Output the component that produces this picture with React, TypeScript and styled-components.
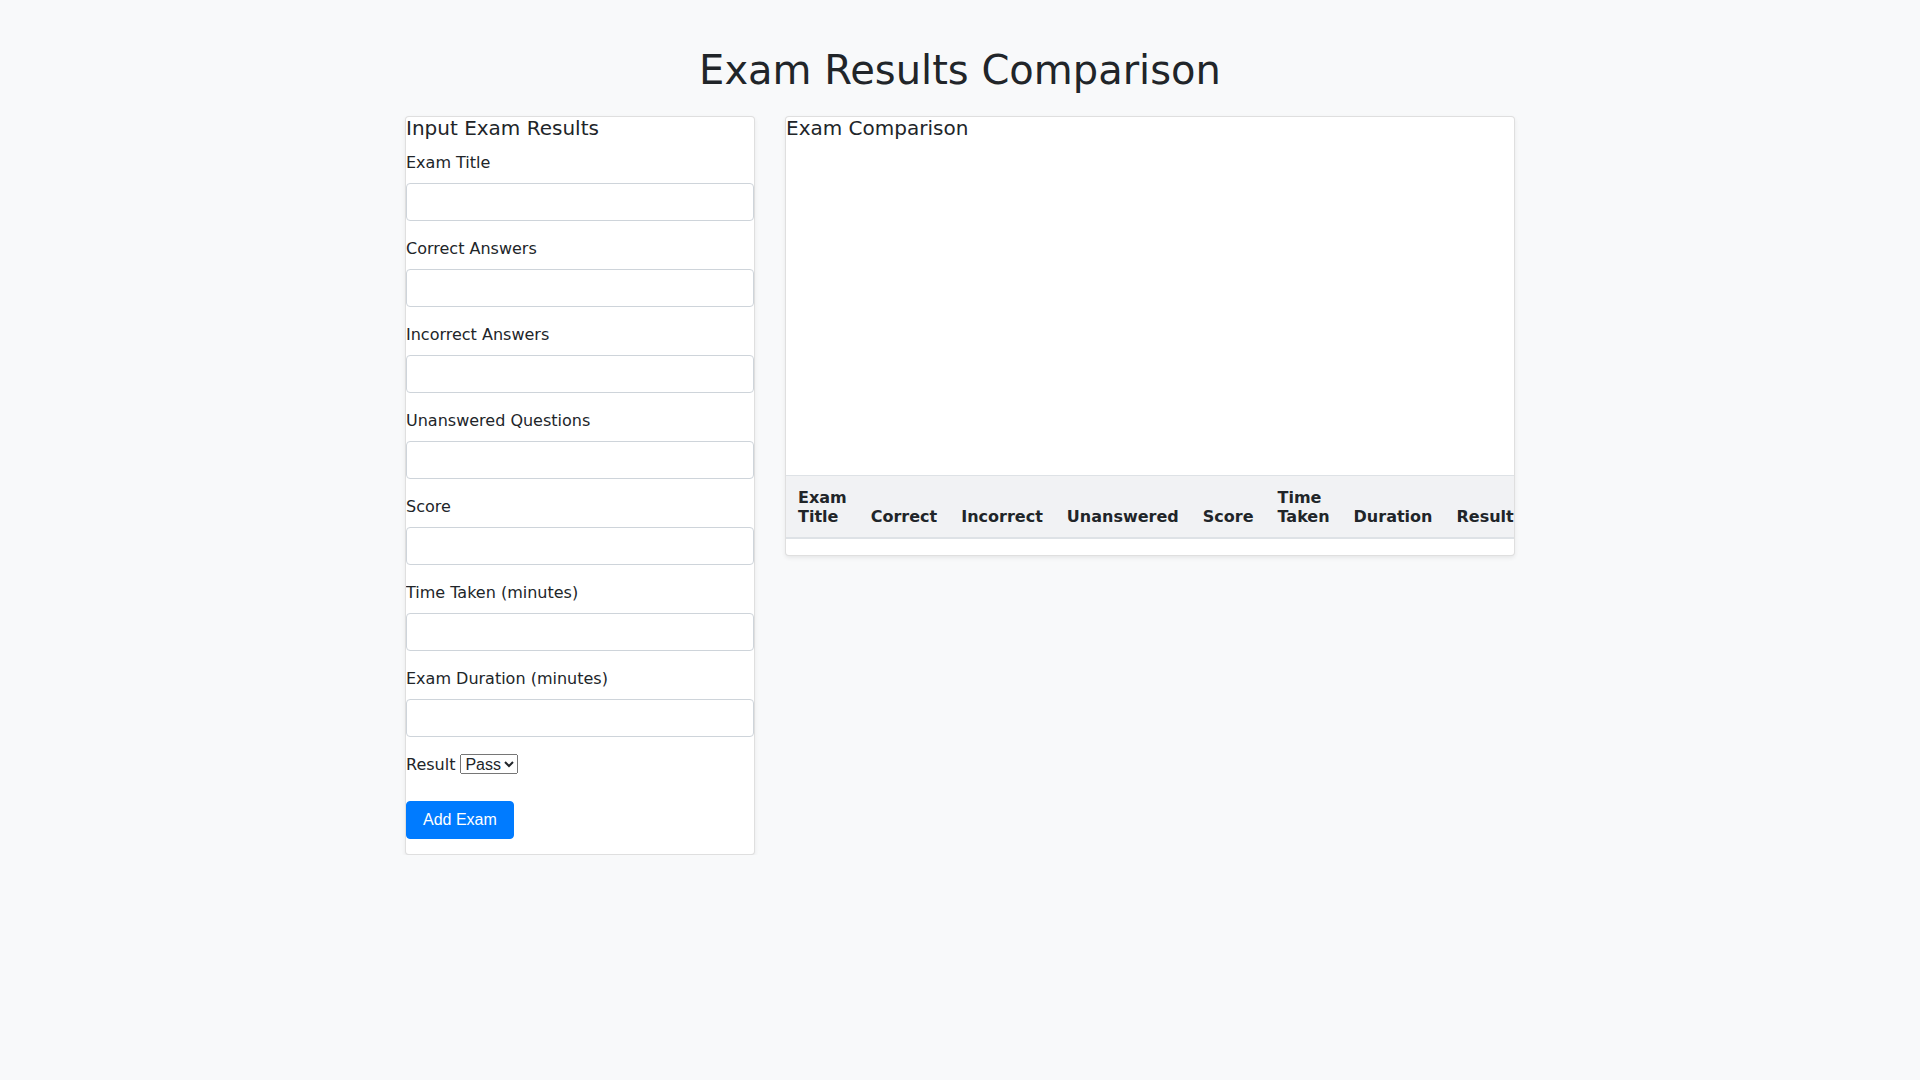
import React from "react";
import styled, { createGlobalStyle } from "styled-components";

const GlobalStyle = createGlobalStyle`
  html, body {
    margin: 0;
    padding: 0;
    background: #f8f9fa;
    color: #212529;
    font-family: "DejaVu Sans", sans-serif;
    font-size: 16px;
    line-height: 1.5;
  }
  * { box-sizing: border-box; }
`;

const Container = styled.div`
  max-width: 1140px;
  margin: 0 auto;
  padding: 0 15px;
`;

const Title = styled.h1`
  margin: 46px 0 22px;
  font-size: 40px;
  font-weight: 400;
  line-height: 48px;
  text-align: center;
`;

const Row = styled.div`
  display: grid;
  grid-template-columns: 350px 1fr;
  column-gap: 30px;
  align-items: start;
`;

const Card = styled.section`
  background: #fff;
  border: 1px solid rgba(0, 0, 0, 0.125);
  border-radius: 4px;
  box-shadow: 0 2px 4px rgba(0, 0, 0, 0.075);
  overflow: hidden;
`;

const CardTitle = styled.h2`
  margin: 0 0 10px;
  font-size: 20px;
  font-weight: 400;
  line-height: 23px;
  padding-bottom: 1px;
`;

const Form = styled.form`
  display: flex;
  flex-direction: column;
  padding-bottom: 15px;
`;

const Group = styled.div`
  margin-bottom: 16px;
`;

const Label = styled.label`
  display: block;
  margin-bottom: 8px;
  line-height: 24px;
`;

const Input = styled.input`
  display: block;
  width: 100%;
  height: 38px;
  padding: 6px 12px;
  border: 1px solid #ced4da;
  border-radius: 4px;
  background: #fff;
  font-family: "DejaVu Sans", sans-serif;
  font-size: 16px;
  color: #495057;
`;

const Select = styled.select`
  margin-left: 5px;
  padding: 0;
  height: 20px;
  font-family: "Liberation Sans", Arial, sans-serif;
  font-size: 16px;
  color: #212529;
  vertical-align: baseline;
`;

const Button = styled.button`
  align-self: flex-start;
  height: 38px;
  padding: 0 16px;
  border: 1px solid #007bff;
  border-radius: 4px;
  background: #007bff;
  color: #fff;
  font-family: "Liberation Sans", Arial, sans-serif;
  font-size: 16px;
  line-height: 1;
  cursor: pointer;
`;

const ChartArea = styled.div`
  height: 334px;
  margin-top: -10px;
  padding-top: 10px;
`;

const TableWrap = styled.div`
  overflow: hidden;
  margin-bottom: 16px;
`;

const Table = styled.table`
  width: 100%;
  border-collapse: collapse;
`;

const Th = styled.th`
  padding: 12px 12px 11px;
  background: #f1f2f4;
  border-top: 1px solid #dee2e6;
  border-bottom: 2px solid #dee2e6;
  font-weight: 700;
  line-height: 19px;
  text-align: left;
  vertical-align: bottom;
  color: #212529;
`;

const fields = [
  "Exam Title",
  "Correct Answers",
  "Incorrect Answers",
  "Unanswered Questions",
  "Score",
  "Time Taken (minutes)",
  "Exam Duration (minutes)",
];

const columns = [
  "Exam Title",
  "Correct",
  "Incorrect",
  "Unanswered",
  "Score",
  "Time Taken",
  "Duration",
  "Result",
];

export default function App() {
  return (
    <>
      <GlobalStyle />
      <Container>
        <Title>Exam Results Comparison</Title>
        <Row>
          <Card>
            <CardTitle>Input Exam Results</CardTitle>
            <Form onSubmit={(e) => e.preventDefault()}>
              {fields.map((f) => (
                <Group key={f}>
                  <Label>{f}</Label>
                  <Input type="text" />
                </Group>
              ))}
              <Group>
                <Label>
                  Result
                  <Select defaultValue="Pass">
                    <option>Pass</option>
                    <option>Fail</option>
                  </Select>
                </Label>
              </Group>
              <Button type="submit">Add Exam</Button>
            </Form>
          </Card>
          <Card>
            <CardTitle>Exam Comparison</CardTitle>
            <ChartArea />
            <TableWrap>
              <Table>
                <thead>
                  <tr>
                    {columns.map((c) => (
                      <Th key={c}>{c}</Th>
                    ))}
                  </tr>
                </thead>
                <tbody />
              </Table>
            </TableWrap>
          </Card>
        </Row>
      </Container>
    </>
  );
}
